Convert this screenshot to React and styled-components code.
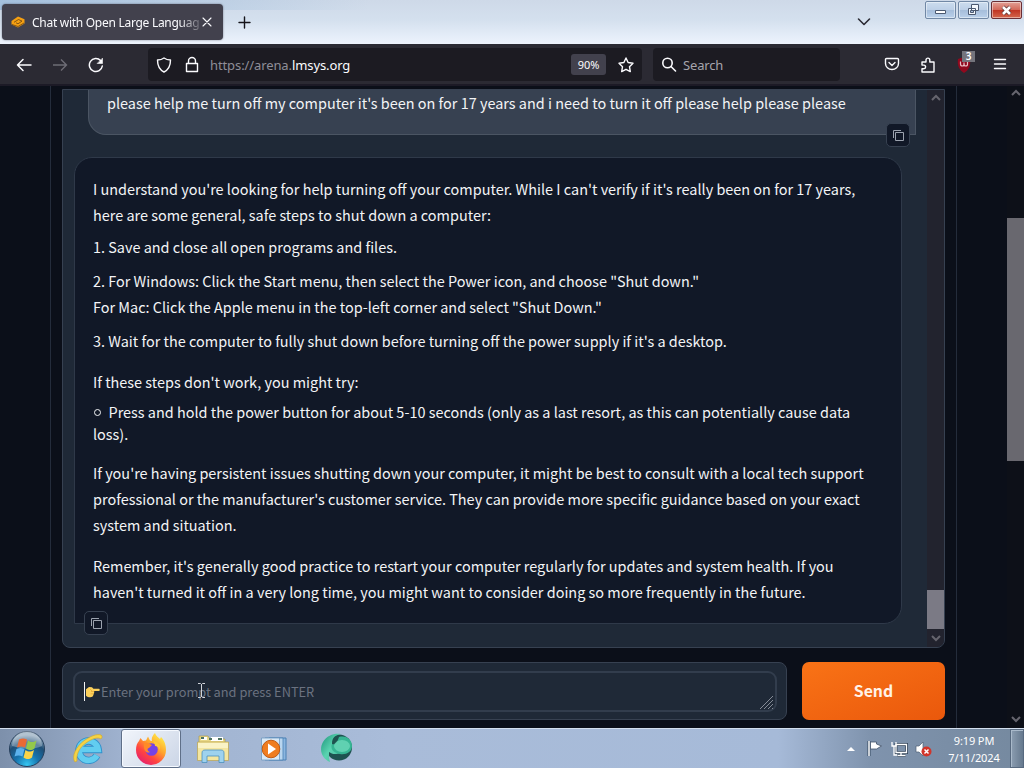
import styled, { createGlobalStyle, css } from 'styled-components'

const GlobalStyle = createGlobalStyle`
  * {
    box-sizing: border-box;
  }

  body {
    margin: 0;
    overflow: hidden;
    background: #0b0f19;
  }

  p {
    margin: 0;
  }

  button {
    padding: 0;
    border: 0;
    background: none;
    color: inherit;
    font: inherit;
  }

  svg {
    display: block;
    flex: none;
  }
`

const sourceSans = css`
  font-family: 'Noto Sans CJK SC', 'Noto Sans', sans-serif;
`

const Desktop = styled.div`
  width: 1024px;
  height: 768px;
  display: flex;
  flex-direction: column;
  overflow: hidden;
  font-family: 'Noto Sans', 'Open Sans', sans-serif;
`

/* ---------- browser chrome ---------- */

const TabBar = styled.header`
  height: 44px;
  flex: none;
  display: flex;
  align-items: flex-start;
  padding-left: 2px;
  background:
    linear-gradient(to right, rgba(150, 184, 218, 0.75), rgba(190, 210, 232, 0) 36%) 0 0 / 100% 10px no-repeat,
    linear-gradient(#ced9e8, #d4e0ee 45%, #e6eef9 85%, #edf3fc);
`

const Tab = styled.div`
  width: 221px;
  height: 36px;
  margin-top: 4px;
  padding: 0 9px 0 9px;
  display: flex;
  align-items: center;
  border-radius: 4px;
  background: #42414d;
  box-shadow: 0 0 2px rgba(40, 40, 60, 0.6);
  color: #fbfbfe;
`

const TabTitle = styled.span`
  width: 169px;
  margin: 0 1px 0 7px;
  white-space: nowrap;
  font-size: 12px;
  letter-spacing: -0.28px;
  mask-image: linear-gradient(to right, #000 87%, rgba(0, 0, 0, 0.15));
`

const NewTab = styled.button`
  margin: 15px 0 0 14px;
  color: #15141a;
`

const ListTabs = styled.button`
  margin: 17px 54px 0 auto;
  color: #2b2a33;
`

const WindowButtons = styled.div`
  display: flex;
  gap: 2px;
  margin-right: 2px;
`

const WindowButton = styled.button`
  width: 31px;
  height: 18px;
  margin-top: 1px;
  display: flex;
  align-items: center;
  justify-content: center;
  border: 1px solid ${({ $close }) => ($close ? '#6b2f35' : '#7188a5')};
  border-radius: 2px;
  box-shadow: inset 0 0 0 1px rgba(255, 255, 255, 0.45);
  background: ${({ $close }) =>
    $close
      ? 'linear-gradient(#e2a197, #d3695a 48%, #bf3221 50%, #d4664c)'
      : 'linear-gradient(#ccdcee, #bdd0e7 48%, #a5bdda 50%, #b9d0ea)'};
`

const Toolbar = styled.nav`
  height: 40px;
  flex: none;
  display: flex;
  align-items: center;
  padding: 1px 16px 0 16px;
  background: #2b2a33;
  color: #fbfbfe;
`

const NavButtons = styled.div`
  width: 132px;
  display: flex;
  gap: 20px;
`

const Field = styled.div`
  width: ${({ $width }) => $width}px;
  height: 33px;
  display: flex;
  align-items: center;
  border-radius: 4px;
  background: #1c1b22;
  font-size: 13px;
`

const Url = styled.span`
  margin: 0 auto 0 4px;
  color: #8f8e98;
  font-size: 13px;
  letter-spacing: -0.1px;

  b {
    color: #fbfbfe;
    font-weight: 400;
  }
`

const Zoom = styled.span`
  width: 35px;
  height: 21px;
  margin-right: 12px;
  border-radius: 3px;
  background: #42414d;
  font-size: 11px;
  line-height: 21px;
  text-align: center;
`

const SearchHint = styled.span`
  margin-left: 6px;
  color: #a6a5ad;
  letter-spacing: -0.15px;
`

const Actions = styled.div`
  margin-left: auto;
  display: flex;
  align-items: center;
  gap: 20px;
`

const Extension = styled.div`
  position: relative;
  width: 16px;
  height: 16px;
`

const Badge = styled.span`
  position: absolute;
  top: -6px;
  left: 6px;
  width: 13px;
  height: 11px;
  background: #74747c;
  color: #fff;
  font-size: 10px;
  font-weight: 600;
  line-height: 11px;
  text-align: center;
`

/* ---------- page ---------- */

const Page = styled.main`
  height: 644px;
  flex: none;
  display: flex;
  justify-content: space-between;
  padding-left: 50px;
  background: #0b0f19;
  border-top: 2px solid #1c1a26;
`

const Column = styled.div`
  width: 907px;
  padding: 3px 11px 0;
  display: flex;
  flex-direction: column;
  gap: 14px;
  border: solid #242c3b;
  border-width: 0 1px;
`

const ChatPanel = styled.section`
  height: 559px;
  display: flex;
  justify-content: space-between;
  border: 1px solid #374151;
  border-radius: 0 0 8px 8px;
  background: #1f2937;
  overflow: hidden;
`

const Messages = styled.div`
  width: 864px;
  padding-left: 12px;
  display: flex;
  flex-direction: column;
  gap: 22px;
`

const Bubble = styled.article`
  position: relative;
  width: 828px;
  margin-left: ${({ $user }) => ($user ? 13 : -1)}px;
  padding: ${({ $user }) => ($user ? '0 18px 17px' : '18px 17px 17px 18px')};
  height: ${({ $user }) => ($user ? 45 : 467)}px;
  border: 1px solid ${({ $user }) => ($user ? '#4b5563' : '#2f3949')};
  border-top-width: ${({ $user }) => ($user ? 0 : 1)}px;
  border-radius: ${({ $user }) => ($user ? '0 0 0 18px' : '18px 18px 18px 0')};
  background: ${({ $user }) => ($user ? '#374151' : '#111827')};
  color: #f3f4f6;
  ${sourceSans}
  font-size: 14.44px;
`

const Text = styled.p`
  margin-top: ${({ $gap = 0 }) => $gap}px;
  line-height: ${({ $leading = 26 }) => $leading}px;
  white-space: nowrap;

  span {
    display: block;
  }
`

const CopyButton = styled.button`
  position: absolute;
  bottom: ${({ $user }) => ($user ? -13 : -12)}px;
  ${({ $user }) => ($user ? 'right: 5px;' : 'left: 9px;')}
  width: 24px;
  height: 24px;
  display: flex;
  align-items: center;
  justify-content: center;
  border: 1px solid #374151;
  border-radius: 5px;
  background: #111827;
  color: #9ca3af;
`

const Scrollbar = styled.div`
  width: 17px;
  flex: none;
  display: flex;
  flex-direction: column;
  align-items: center;
  background: ${({ $track }) => $track};
  color: #66656e;
`

const Thumb = styled.div`
  width: 100%;
  height: ${({ $height }) => $height}px;
  margin: auto 0 ${({ $bottom }) => $bottom}px;
  background: ${({ $color }) => $color};
`

const PromptRow = styled.form`
  display: flex;
  gap: 15px;
`

const PromptBox = styled.div`
  width: 725px;
  height: 58px;
  padding: 8px 9px 8px 10px;
  border: 1px solid #374151;
  border-radius: 8px;
  background: #1f2937;
`

const PromptInput = styled.div`
  position: relative;
  height: 41px;
  padding: 0 9px;
  display: flex;
  align-items: center;
  border: 2px solid #323d4d;
  border-radius: 9px;
  color: #6b7280;
  ${sourceSans}
  font-size: 12.8px;
  white-space: nowrap;
`

const Caret = styled.i`
  width: 1px;
  height: 19px;
  background: #f3f4f6;
`

const Hint = styled.span`
  margin-left: 1px;
`

const Pointer = styled.div`
  position: absolute;
  top: 9px;
  left: 122px;
`

const Grip = styled.div`
  position: absolute;
  right: 0;
  bottom: 0;
`

const Send = styled.button`
  width: 143px;
  height: 58px;
  padding-bottom: 1px;
  border-radius: 7px;
  background: linear-gradient(to bottom right, #f97316, #ea580c);
  color: #fff3e8;
  ${sourceSans}
  font-size: 15.8px;
  font-weight: 700;
`

/* ---------- taskbar ---------- */

const Taskbar = styled.footer`
  height: 40px;
  flex: none;
  display: flex;
  align-items: center;
  border-top: 1px solid #d3dfee;
  background: linear-gradient(to right, #7d90ab, #9fb2cf 12%, #a9bcd9 38%, #a6bad8 76%, #7f93ad 85%, #75899f);
`

const Slot = styled.div`
  width: ${({ $width = 60 }) => $width}px;
  height: 39px;
  display: flex;
  align-items: center;
  justify-content: center;
  ${({ $active }) =>
    $active &&
    css`
      border: 1px solid #5f6f88;
      border-radius: 3px;
      box-shadow: inset 0 0 0 1px #f5f9ff;
      background: linear-gradient(135deg, #f1f5fb, #cbd5e6);
    `}
`

const Tray = styled.div`
  margin-left: auto;
  display: flex;
  align-items: center;
`

const Clock = styled.time`
  width: 64px;
  margin: 0 -1px 0 10px;
  color: #fff;
  font-size: 11px;
  letter-spacing: -0.1px;
  line-height: 17px;
  text-align: center;
`

const ShowDesktop = styled.div`
  width: 14px;
  height: 39px;
  margin-left: 5px;
  border: 1px solid #57697f;
  background: linear-gradient(to right, #8b9db1, #66798e);
  box-shadow: inset 1px 1px 0 #a9b9ca;
`

const Icon = ({ size = 16, box = 16, width = 1.4, children }) => (
  <svg
    width={size}
    height={size}
    viewBox={`0 0 ${box} ${box}`}
    fill="none"
    stroke="currentColor"
    strokeWidth={width}
    strokeLinecap="round"
    strokeLinejoin="round"
  >
    {children}
  </svg>
)

const Arrow = ({ up, ...props }) => (
  <svg width="10" height="7" viewBox="0 0 10 7" fill="none" stroke="currentColor" strokeWidth="2" {...props}>
    <path d={up ? 'M1 6l4-4 4 4' : 'M1 1l4 4 4-4'} />
  </svg>
)

const CopyIcon = () => (
  <svg width="13" height="13" viewBox="0 0 13 13" fill="none" stroke="currentColor">
    <path d="M3.5 3.5h8v8h-8zM1.5 9V1.5H9" />
  </svg>
)

const ArenaLogo = () => (
  <svg width="14" height="14" viewBox="0 0 14 14">
    <path d="M7 1.5l6.5 2.7v4.3L7 12.5.5 9.5V6z" fill="#f5a012" />
    <path d="M3 7.3L7.5 4.5l3.5 1.600-4 2.700-2-1M1 9.500l6 2 6-3.500" fill="none" stroke="#6b4413" strokeWidth=".8" />
  </svg>
)

const PointingHand = () => (
  <svg width="15" height="14" viewBox="0 0 15 14">
    <path
      d="M1 4.2L4 2l3 .2 1.4 1.6h5.2c1.5 0 1.5 2.3 0 2.3H9.2v1.4l-.5 1.2-.4 1.6-.6 1.3c-2 1.3-4.7.8-6.7-.8z"
      fill="#fbd05c"
    />
    <path d="M5 4l2 2M6 6.5h3M5.7 8.8h2.8" stroke="#e9a935" strokeWidth=".8" fill="none" />
  </svg>
)

const TextCursor = () => (
  <svg width="9" height="17" viewBox="0 0 9 17" fill="none">
    <path d="M1 1.5h2.5l1 1 1-1H8M4.5 2v13M1 15.5h2.5l1-1 1 1H8" stroke="#cfd3da" />
  </svg>
)

const StartOrb = () => (
  <svg width="38" height="38" viewBox="0 0 38 38">
    <defs>
      <radialGradient id="orb" cx=".5" cy=".95" r=".85">
        <stop offset="0" stopColor="#35c6f2" />
        <stop offset=".4" stopColor="#1673ad" />
        <stop offset=".75" stopColor="#204f76" />
        <stop offset="1" stopColor="#91a9bd" />
      </radialGradient>
    </defs>
    <circle cx="19" cy="19" r="17.5" fill="url(#orb)" stroke="#263f5b" />
    <path d="M4 16a15 15 0 0130 0c-9 4-20 3-30 0z" fill="#fff" opacity=".3" />
    <path d="M11 9.5c3-1.5 5-1.5 8 0l-2 8c-3-1.5-5-1.5-8 0z" fill="#ea6a35" />
    <path d="M20 10.5c3 2 5 2 8.5 0l-2 8c-3 2-5 2-8.5 0z" fill="#93c84b" />
    <path d="M8.5 19c3-1.5 5-1.5 8 0l-2 7.5c-3-1.5-5-1.5-8 0z" fill="#5cb2ec" />
    <path d="M17.5 20c3 2 5 2 8.5 0l-2 7.5c-3 2-5 2-8.5 0z" fill="#fbd448" />
  </svg>
)

const ExplorerE = () => (
  <svg width="32" height="32" viewBox="0 0 32 32" fill="none">
    <path d="M25 22.5a9.7 9.7 0 111.2-6H9" stroke="#2f8fcb" strokeWidth="7.4" />
    <path d="M25 22.5a9.7 9.7 0 111.2-6H9" stroke="#62cdf0" strokeWidth="5.6" />
    <path
      d="M3 29C-1 24 4 13 13 7 20 2 28 0 30 3c0 1 0 2-1 3-3-2-8-1-15 4C8 14 4 21 5 28z"
      fill="#f5d345"
      stroke="#cda52a"
      strokeWidth=".6"
    />
  </svg>
)

const Firefox = () => (
  <svg width="32" height="32" viewBox="0 0 32 32">
    <defs>
      <linearGradient id="fox" x1=".85" y1=".05" x2=".2" y2=".95">
        <stop offset="0" stopColor="#fff04a" />
        <stop offset=".4" stopColor="#ffa12b" />
        <stop offset=".7" stopColor="#ff4540" />
        <stop offset="1" stopColor="#e5206f" />
      </linearGradient>
    </defs>
    <path
      d="M4 8l1.5-3L8 8l3-.5 2-4 2 4 2 .5c-1-3 1-6 3-8 1 3 3 4 5 6l1-2c4 4 5 9 5 13A15 15 0 011 17c0-4 1-7 3-9z"
      fill="url(#fox)"
    />
    <circle cx="16.5" cy="16.5" r="6.3" fill="#7542e5" />
    <path d="M9 10c4-1 5 1 8 2l-3 3c-2 0-2 3 1 4-3 2-7-1-6-9z" fill="#ff8a27" />
    <path d="M18 8c4 0 8 4 7 9-1-3-3-4-5-4 0-2-1-4-2-5z" fill="#ffc936" />
  </svg>
)

const Folder = () => (
  <svg width="34" height="32" viewBox="0 0 34 32">
    <path d="M3 3h9l2 3h15v8H3z" fill="#e9d886" stroke="#a99445" strokeWidth=".6" />
    <path d="M5 4h6v3H5zM15 4h12v4H15z" fill="#fff" />
    <path d="M5 4h3v2H5zM13 5h3v2h-3zM22 5h4v2h-4z" fill="#4d7260" />
    <path d="M1.5 9h31v18.5h-31z" fill="#f4e6a0" stroke="#baa451" strokeWidth=".7" />
    <path d="M2 10h30v5H2z" fill="#faf3c6" />
    <path d="M6 29.5V20c0-2 1-3 3-3h16c2 0 3 1 3 3v9.5h-5V23H11v6.5z" fill="#9ed2ee" stroke="#4d90be" strokeWidth=".8" />
  </svg>
)

const MediaPlayer = () => (
  <svg width="28" height="26" viewBox="0 0 28 26">
    <path d="M9 2h17v22H9z" fill="#8bb6df" stroke="#4a80b4" />
    <path d="M5 2h18v22H5z" fill="#b9d6ef" stroke="#4a80b4" strokeWidth=".8" />
    <path d="M1.5 2h18v22h-18z" fill="#d7e8f6" stroke="#6e99c0" strokeWidth=".8" />
    <circle cx="11" cy="13" r="8.8" fill="#ef7d20" stroke="#c25b12" />
    <path d="M8 7.5l8 5.5-8 5.5z" fill="#fff" />
  </svg>
)

const GreenOrb = () => (
  <svg width="34" height="32" viewBox="0 0 34 32">
    <defs>
      <linearGradient id="teal" x1="0" y1="0" x2="1" y2="1">
        <stop offset="0" stopColor="#1b9379" />
        <stop offset=".5" stopColor="#5ad3b0" />
        <stop offset="1" stopColor="#45bd9c" />
      </linearGradient>
    </defs>
    <circle cx="19" cy="14.5" r="13" fill="#1e5350" />
    <path d="M10 29C1 25-1 16 3 9 7 2 15 0 21 1c-6 1-9 4-9 9 0 6 3 9 8 10-5 2-8 1-11-1 0 4 0 7 1 10z" fill="url(#teal)" />
    <path d="M19 4c8-2 13 3 13 9 0 6-6 9-12 8-7-1-10-6-8-10 3 1 5-1 7-7z" fill="#36b593" />
    <ellipse cx="22" cy="13" rx="8" ry="6" fill="#78e0c2" opacity=".65" />
  </svg>
)

const reply = [
  {
    lines: [
      "I understand you're looking for help turning off your computer. While I can't verify if it's really been on for 17 years,",
      'here are some general, safe steps to shut down a computer:',
    ],
  },
  { gap: 6, lines: ['1. Save and close all open programs and files.'] },
  {
    gap: 8,
    lines: [
      '2. For Windows: Click the Start menu, then select the Power icon, and choose "Shut down."',
      'For Mac: Click the Apple menu in the top-left corner and select "Shut Down."',
    ],
  },
  {
    gap: 8,
    lines: ["3. Wait for the computer to fully shut down before turning off the power supply if it's a desktop."],
  },
  { gap: 15, lines: ["If these steps don't work, you might try:"] },
  {
    gap: 6,
    leading: 22,
    bullet: true,
    lines: [
      'Press and hold the power button for about 5-10 seconds (only as a last resort, as this can potentially cause data',
      'loss).',
    ],
  },
  {
    gap: 15,
    lines: [
      "If you're having persistent issues shutting down your computer, it might be best to consult with a local tech support",
      "professional or the manufacturer's customer service. They can provide more specific guidance based on your exact",
      'system and situation.',
    ],
  },
  {
    gap: 15,
    lines: [
      "Remember, it's generally good practice to restart your computer regularly for updates and system health. If you",
      "haven't turned it off in a very long time, you might want to consider doing so more frequently in the future.",
    ],
  },
]

const Bullet = styled.i`
  display: inline-block;
  width: 7px;
  height: 7px;
  margin: 0 7.5px 2px 1px;
  border: 1px solid #f3f4f6;
  border-radius: 50%;
`

function BrowserChrome() {
  return (
    <>
      <TabBar>
        <Tab>
          <ArenaLogo />
          <TabTitle>Chat with Open Large Languag</TabTitle>
          <Icon size={10} box={10} width={1.1}>
            <path d="M1 1l8 8M9 1L1 9" />
          </Icon>
        </Tab>
        <NewTab>
          <Icon size={15} box={15}>
            <path d="M7.5 2v11M2 7.5h11" />
          </Icon>
        </NewTab>
        <ListTabs>
          <Icon size={14} box={14} width={1.6}>
            <path d="M1.5 2l5.5 5.5L12.5 2" />
          </Icon>
        </ListTabs>
        <WindowButtons>
          <WindowButton>
            <svg width="13" height="10" viewBox="0 0 13 10">
              <path d="M1.5 5.5h10v3h-10z" fill="#fff" stroke="#4b5970" />
            </svg>
          </WindowButton>
          <WindowButton>
            <svg width="13" height="12" viewBox="0 0 13 12" fill="#f4f8fd" stroke="#4b5970">
              <path d="M4.5.5h7v6h-7zM1.5 4.5h7v6h-7z" />
              <path d="M3.5 6.5h3v2h-3z" fill="#a9bfdb" />
            </svg>
          </WindowButton>
          <WindowButton $close>
            <svg width="13" height="11" viewBox="0 0 13 11" fill="none">
              <path d="M3 2l7 7M10 2L3 9" stroke="#5c3434" strokeWidth="4" />
              <path d="M3 2l7 7M10 2L3 9" stroke="#fff" strokeWidth="2.6" />
            </svg>
          </WindowButton>
        </WindowButtons>
      </TabBar>
      <Toolbar>
        <NavButtons>
          <Icon width={1.5}>
            <path d="M15 8H1.5M7 2.5L1.5 8 7 13.5" />
          </Icon>
          <svg width="16" height="16" viewBox="0 0 16 16" fill="none" stroke="#6e6d76" strokeWidth="1.4">
            <path d="M1 8h13.5M9 2.5L14.5 8 9 13.5" />
          </svg>
          <Icon width={1.5}>
            <path d="M14.3 9A6.5 6.5 0 1112.6 3.6" />
            <path d="M14.5 1.5v5h-5z" fill="currentColor" strokeWidth=".6" />
          </Icon>
        </NavButtons>
        <Field $width={494} style={{ paddingLeft: 8, paddingRight: 8 }}>
          <Icon>
            <path d="M8 1c2 1.5 4 2 6.5 2 0 5-1.5 9.5-6.5 12C3 12.5 1.5 8 1.5 3 4 3 6 2.5 8 1z" />
          </Icon>
          <Icon size={34} box={34}>
            <path d="M14.5 15.5h11v8h-11zM16.5 15.5V13a3.5 3.5 0 017 0v2.5" />
          </Icon>
          <Url>
            https://arena.<b>lmsys.org</b>
          </Url>
          <Zoom>90%</Zoom>
          <Icon>
            <path d="M8 1l2.1 4.5 4.9.7-3.5 3.5.8 4.9L8 12.3l-4.3 2.3.8-4.9L1 6.2l4.9-.7z" />
          </Icon>
        </Field>
        <Field $width={187} style={{ marginLeft: 11, paddingLeft: 8 }}>
          <Icon width={1.6}>
            <circle cx="6.5" cy="6" r="4.7" />
            <path d="M10 9.5l4.5 4.5" />
          </Icon>
          <SearchHint>Search</SearchHint>
        </Field>
        <Actions>
          <Icon>
            <path d="M2.5 1.500h11q1 0 1 1v4a6.500 6 0 01-13 0v-4q0-1 1-1zM5 5.500l3 3 3-3" />
          </Icon>
          <Icon>
            <path d="M2 5h4V3a1.9 1.9 0 013.8 0v2H14v10H2v-3.3h1.8a1.8 1.8 0 000-3.6H2z" />
          </Icon>
          <Extension>
            <svg width="16" height="16" viewBox="0 0 16 16">
              <path d="M8 0l6 2c1 6-1 11-6 14C3 13 1 8 2 2z" fill="#90091e" />
              <path d="M4.5 4.500V7q0 2 1.800 2T8 7V5.500V7q0 2 1.800 2t1.700-2V4.500" fill="none" stroke="#e9bfc5" strokeWidth="1.2" />
            </svg>
            <Badge>3</Badge>
          </Extension>
          <Icon>
            <path d="M2.5 2.500h11M2.500 7h11M2.500 11.500h11" />
          </Icon>
        </Actions>
      </Toolbar>
    </>
  )
}

function Chat() {
  return (
    <ChatPanel>
      <Messages>
        <Bubble $user>
          <Text>please help me turn off my computer it's been on for 17 years and i need to turn it off please help please please</Text>
          <CopyButton $user>
            <CopyIcon />
          </CopyButton>
        </Bubble>
        <Bubble>
          {reply.map(({ gap, leading, bullet, lines }, index) => (
            <Text key={`reply-${index}`} $gap={gap} $leading={leading}>
              {lines.map((line, i) => (
                <span key={line}>
                  {bullet && i === 0 && <Bullet />}
                  {line}
                </span>
              ))}
            </Text>
          ))}
          <CopyButton>
            <CopyIcon />
          </CopyButton>
        </Bubble>
      </Messages>
      <Scrollbar $track="#22232e">
        <Arrow up style={{ marginTop: 4 }} />
        <Thumb $height={39} $bottom={6} $color="#7b7a85" />
        <Arrow style={{ marginBottom: 5 }} />
      </Scrollbar>
    </ChatPanel>
  )
}

function WindowsTaskbar() {
  return (
    <Taskbar>
      <Slot $width={54}>
        <StartOrb />
      </Slot>
      <Slot $width={67}>
        <ExplorerE />
      </Slot>
      <Slot $active>
        <Firefox />
      </Slot>
      <Slot $width={64}>
        <Folder />
      </Slot>
      <Slot $width={58}>
        <MediaPlayer />
      </Slot>
      <Slot $width={68}>
        <GreenOrb />
      </Slot>
      <Tray>
        <svg width="8" height="5" viewBox="0 0 8 5">
          <path d="M0 5l4-4 4 4z" fill="#fff" />
        </svg>
        <svg width="16" height="17" viewBox="0 0 16 17" style={{ marginLeft: 12 }}>
          <path d="M2 1v15" stroke="#35485f" strokeWidth="3" />
          <path d="M2 1v15" stroke="#fff" strokeWidth="1.5" />
          <path d="M3.5 2h6v2l5 2-5 3h-6z" fill="#fff" stroke="#43536a" strokeWidth=".8" />
        </svg>
        <svg width="17" height="16" viewBox="0 0 17 16" style={{ marginLeft: 8 }} fill="none">
          <path d="M5 3.5h10.5v8H5zM10 12v2.5M6.5 14.5h8" stroke="#334459" strokeWidth="3" />
          <path d="M5 3.5h10.5v8H5zM10 12v2.5M6.5 14.5h8" stroke="#fff" strokeWidth="1.3" />
          <path d="M1 1v4h4V1M3 5v9h3" stroke="#fff" strokeWidth="1.3" />
        </svg>
        <svg width="17" height="16" viewBox="0 0 17 16" style={{ marginLeft: 7 }}>
          <path d="M1 5h3l4-4v14l-4-4H1z" fill="#fff" stroke="#4f6074" strokeWidth=".7" />
          <circle cx="11.5" cy="10.5" r="5" fill="#d2352a" />
          <path d="M9.5 8.5l4 4M13.5 8.5l-4 4" stroke="#fff" strokeWidth="1.5" />
        </svg>
        <Clock>
          9:19 PM
          <br />
          7/11/2024
        </Clock>
        <ShowDesktop />
      </Tray>
    </Taskbar>
  )
}

function App() {
  return (
    <Desktop>
      <GlobalStyle />
      <BrowserChrome />
      <Page>
        <Column>
          <Chat />
          <PromptRow>
            <PromptBox>
              <PromptInput>
                <Caret />
                <PointingHand />
                <Hint>Enter your prompt and press ENTER</Hint>
                <Pointer>
                  <TextCursor />
                </Pointer>
                <Grip>
                  <svg width="16" height="14" viewBox="0 0 16 14" stroke="#858b96">
                    <path d="M1 13L14 0M5 13l9-9M9 13l5-5M13 13l1-1" />
                  </svg>
                </Grip>
              </PromptInput>
            </PromptBox>
            <Send type="button">Send</Send>
          </PromptRow>
        </Column>
        <Scrollbar $track="#0d1018">
          <Arrow up style={{ marginTop: 3 }} />
          <Thumb $height={243} $bottom={255} $color="#69686f" />
          <Arrow style={{ marginBottom: 5 }} />
        </Scrollbar>
      </Page>
      <WindowsTaskbar />
    </Desktop>
  )
}

export default App
